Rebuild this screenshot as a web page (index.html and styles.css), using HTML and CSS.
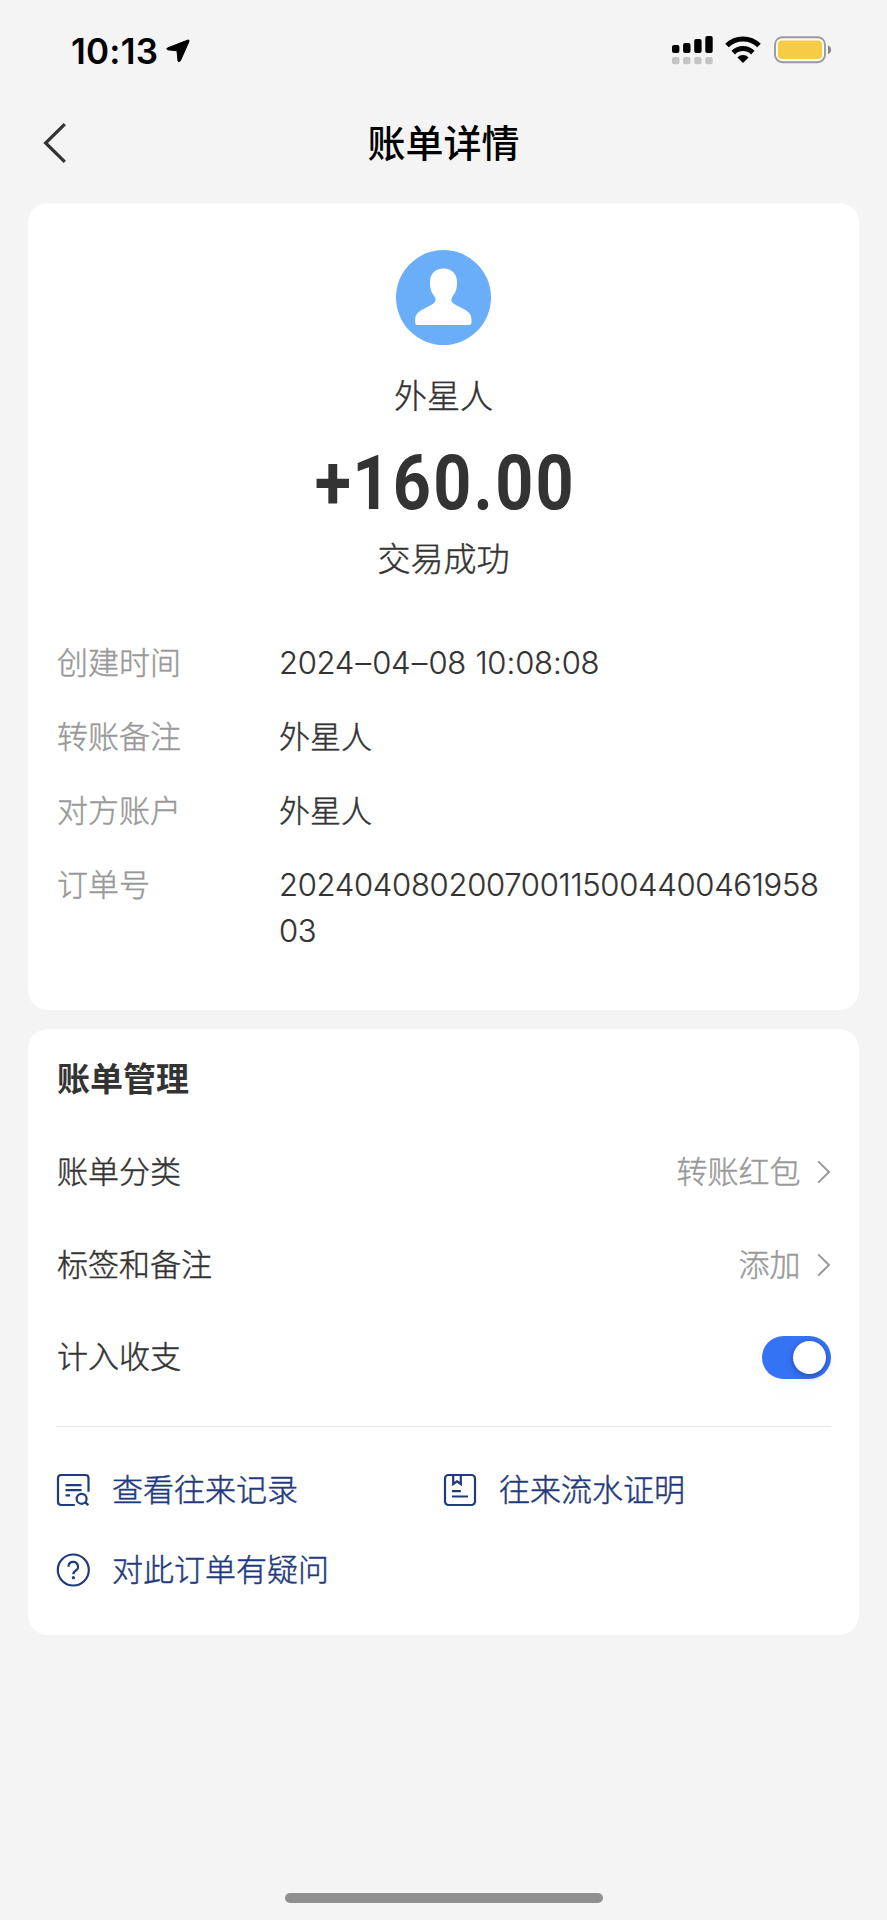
FILE: index.html
```html
<!DOCTYPE html>
<html lang="zh-CN">
<head>
<meta charset="utf-8">
<title>账单详情</title>
<link rel="stylesheet" href="styles.css">
</head>
<body>
<div class="screen">
  <div class="status-bar">
    <div class="clock">10:13</div>
    <svg class="location" width="24" height="24" viewBox="0 0 24 24"><path d="M21.8 1.1 L1.4 9 Q.2 9.8 1.6 10.8 L11 11.8 L12 22 Q13.2 23.4 14.4 21.8 L23 2.4 Q23.4.6 21.8 1.1Z" stroke="#000" stroke-width="1"/></svg>
    <div class="status-icons">
      <svg width="41" height="29" viewBox="0 0 41 29">
        <rect x="0" y="9" width="7.4" height="8" rx="2"/><rect x="11.1" y="7" width="7.4" height="10" rx="2"/><rect x="22.2" y="3" width="7.4" height="14" rx="2"/><rect x="33.3" y="0" width="7.4" height="17" rx="2"/>
        <g fill="#c4c4c4"><rect x="0" y="21" width="7.4" height="7.3" rx="2"/><rect x="11.1" y="21" width="7.4" height="7.3" rx="2"/><rect x="22.2" y="21" width="7.4" height="7.3" rx="2"/><rect x="33.3" y="21" width="7.4" height="7.3" rx="2"/></g>
      </svg>
      <svg class="wifi" width="36" height="28" viewBox="0 0 36 28">
        <g fill="none" stroke="#000" stroke-width="5"><path d="M2 9.6 A22.6 22.6 0 0 1 34 9.6"/><path d="M8.2 16.6 A14 14 0 0 1 27.8 16.6"/></g>
        <path d="M18 27 L12.4 21.4 A8 8 0 0 1 23.6 21.4Z"/>
      </svg>
      <svg class="battery" width="58" height="28" viewBox="0 0 58 28">
        <rect x="1" y="1.2" width="50" height="25" rx="7.5" fill="#fffbea" stroke="#99999f" stroke-width="1.9"/>
        <rect x="4" y="4.4" width="44" height="18.6" rx="4" fill="#f6cc46"/>
        <path d="M54 9.6 Q57 10.5 57 13.7 Q57 17 54 18Z" fill="#85857f"/>
      </svg>
    </div>
  </div>

  <header class="nav">
    <svg class="back" width="24" height="40" viewBox="0 0 24 40"><path d="M21.8 1.2 L2.6 20 L21.8 38.8" fill="none" stroke="#333" stroke-width="3.2"/></svg>
    <h1 class="nav-title">账单详情</h1>
  </header>

  <main class="cards">
    <section class="card bill">
      <svg class="avatar" width="95" height="95" viewBox="0 0 95 95">
        <circle cx="47.5" cy="47.5" r="47.5" fill="#6aaef9"/>
        <path fill="#fff" d="M47.5 18.5 C39 18.5 34 24 34 32 C34 39 35.5 42.5 37.8 45.5 C40.5 49.5 40.5 52 36 54.5 L26.5 59.5 C21.5 62.5 19.2 65 19.2 70 V72.5 Q19.2 75 21.7 75 H73 Q75.5 75 75.5 72.5 V70 C75.5 65 73.5 62.5 68.5 59.5 L59 54.5 C54.5 52 54.5 49.5 57.2 45.5 C59.5 42.5 61 39 61 32 C61 24 56 18.5 47.5 18.5Z"/>
      </svg>
      <div class="payee">外星人</div>
      <div class="amount"><span class="sign">+</span>160.00</div>
      <div class="state">交易成功</div>
      <dl class="details">
        <dt>创建时间</dt><dd class="number">2024<span class="dash">–</span>04<span class="dash">–</span>08 10<span class="colon">:</span>08<span class="colon">:</span>08</dd>
        <dt>转账备注</dt><dd>外星人</dd>
        <dt>对方账户</dt><dd>外星人</dd>
        <dt>订单号</dt><dd class="number">20240408020070011500440046195803</dd>
      </dl>
    </section>

    <section class="card manage">
      <h2 class="manage-title">账单管理</h2>
      <div class="row"><span class="label">账单分类</span><span class="value"><span class="label">转账红包</span><svg class="chevron" width="14" height="24" viewBox="0 0 14 24"><path d="M1.2 1.4 L12 12 L1.2 22.6"/></svg></span></div>
      <div class="row"><span class="label">标签和备注</span><span class="value"><span class="label">添加</span><svg class="chevron" width="14" height="24" viewBox="0 0 14 24"><path d="M1.2 1.4 L12 12 L1.2 22.6"/></svg></span></div>
      <div class="row row-switch"><span class="label">计入收支</span><span class="switch"><span class="knob"></span></span></div>
      <nav class="links">
        <a class="link"><svg class="icon" width="34" height="34" viewBox="0 0 34 34"><path d="M32.5 18.8 V5.2 Q32.5 2 29.3 2 H5.2 Q2 2 2 5.2 V28.8 Q2 32 5.2 32 H18.8 M9.5 12.2 H25.5 M9.5 17.2 H25.5 M9.5 22.4 H14"/><circle cx="25.6" cy="25.8" r="5"/><path d="M29.2 29.4 L32.4 32.2"/></svg><span class="label">查看往来记录</span></a>
        <a class="link"><svg class="icon" width="34" height="34" viewBox="0 0 34 34"><rect x="2" y="2" width="30" height="30" rx="3.5"/><path d="M10.2 2 V11 L14 8.3 L17.8 11 V2 M9 18.2 H17.8 M9 23.5 H25"/></svg><span class="label">往来流水证明</span></a>
        <a class="link"><svg class="icon" width="34" height="34" viewBox="0 0 34 34"><circle cx="17.3" cy="17" r="15.5"/><path d="M12.6 13.8 A4.7 4.7 0 1 1 19.8 17.5 C17.9 18.7 17.4 19.4 17.4 21.3"/><circle class="dot" cx="17.4" cy="24.7" r="1.6"/></svg><span class="label">对此订单有疑问</span></a>
      </nav>
    </section>
  </main>
  <div class="home-indicator"></div>
</div>
</body>
</html>
```
FILE: styles.css
```css
* { box-sizing: border-box; margin: 0; padding: 0; }
body {
  background: #f4f4f4;
  color: #333;
  font-family: "Noto Sans CJK SC", sans-serif;
  font-size: 31px;
  font-weight: 300;
  line-height: 46px;
}
svg { display: block; flex: none; }
.screen { width: 887px; height: 1920px; display: flex; flex-direction: column; }

.status-bar { height: 101px; display: flex; align-items: center; padding: 0 55px 0 71px; color: #000; }
.clock { font: 600 35px/40px Inter, sans-serif; letter-spacing: 0.2px; }
.location { margin-left: 8px; }
.status-icons { display: flex; margin-left: auto; }
.wifi { margin-left: 12px; }
.battery { margin-left: 13px; }

.nav { height: 102px; display: grid; grid-template-columns: 100px 1fr 100px; align-items: center; padding-bottom: 18px; }
.back { margin-left: 43px; }
.nav-title { font-size: 38px; font-weight: 500; line-height: 56px; padding-bottom: 4px; text-align: center; color: #000; }

.cards { display: flex; flex-direction: column; gap: 19px; padding: 0 28px; }
.card { background: #fff; border-radius: 20px; padding: 0 28px; }
.bill { height: 806.5px; padding-top: 47px; display: flex; flex-direction: column; align-items: center; }
.payee { font-size: 33px; line-height: 48px; margin-top: 25px; }
.amount { font: 700 76px/80px Roboto, sans-serif; letter-spacing: 2.6px; margin: 25px -3px 0 0; transform: scaleX(0.875); }
.sign { margin-right: -1px; }
.state { font-size: 33px; line-height: 48px; margin-top: 10px; }
.payee, .state, .details, .label { -webkit-text-stroke: 0.45px currentColor; }
.details { width: 100%; display: grid; grid-template-columns: 223px 1fr; row-gap: 28px; margin-top: 56.5px; }
.details dt { color: #999; padding-left: 1px; }
.details .number { font-family: Inter, sans-serif; overflow-wrap: anywhere; letter-spacing: -0.3px; word-spacing: 1px; padding-top: 2px; margin-bottom: -2px; -webkit-text-stroke-width: 0.2px; }
.dash { margin: 0 1.5px; }
.colon { margin: 0 0.3px; }

.manage { height: 606px; padding-top: 24px; }
.manage-title { font-size: 33px; line-height: 48px; font-weight: 700; padding-left: 1px; }
.row { display: flex; align-items: center; justify-content: space-between; height: 93px; padding-left: 1px; }
.manage-title + .row { margin-top: 25px; }
.row-switch { height: 91px; }
.label { padding-bottom: 4px; }
.value { display: flex; align-items: center; color: #999; }
.chevron { margin-left: 16.5px; fill: none; stroke: #999; stroke-width: 2; }
.switch { width: 69px; height: 43px; border-radius: 22px; background: #3573f5; padding: 5px; display: flex; justify-content: flex-end; box-shadow: 0 8px 16px rgba(53, 115, 245, 0.03); }
.knob { width: 33px; height: 33px; border-radius: 50%; background: #fff; box-shadow: 0 2px 7px rgba(0, 0, 40, 0.35); }
.links { border-top: 1px solid #e5e5e5; margin-top: 23px; padding-top: 38px; display: grid; grid-template-columns: 387px 1fr; row-gap: 30px; }
.link { display: flex; align-items: center; color: #1f3b7d; white-space: nowrap; }
.icon { margin-right: 22px; fill: none; stroke: #1f3b7d; stroke-width: 2.2; }
.dot { fill: #1f3b7d; stroke: none; }

.home-indicator { width: 318px; height: 10px; border-radius: 5px; background: #909090; margin: auto auto 17px 285px; }
```
